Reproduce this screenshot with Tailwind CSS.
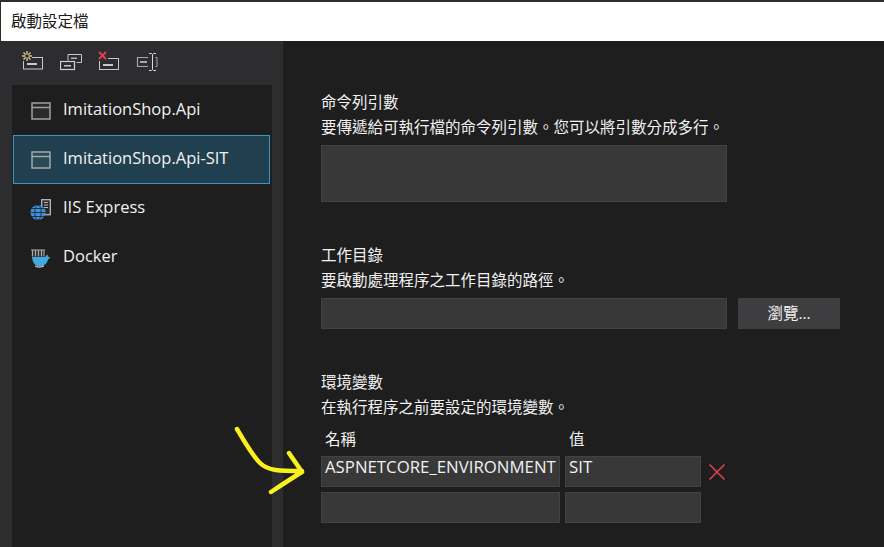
<!DOCTYPE html>
<html lang="zh-Hant">
<head>
<meta charset="utf-8">
<script src="https://cdn.jsdelivr.net/npm/@tailwindcss/browser@4"></script>
</head>
<body class="w-[884px] h-[547px] overflow-hidden bg-[#1e1e1e] text-[#f1f1f1] text-[15.5px] leading-[25px] font-['Open_Sans','Noto_Sans_CJK_TC',sans-serif]">
<div class="h-[547px] flex flex-col pl-px pt-[2px] bg-[#2d2d30]">
  <div class="h-[39px] shrink-0 bg-white text-[#1a1a1a] pl-[10px] flex items-center text-[15.5px]">啟動設定檔</div>
  <div class="flex flex-1 min-h-0">
    <aside class="w-[282px] shrink-0 bg-[#2d2d30] flex flex-col">
      <div class="h-[44px] shrink-0 pl-[21px] pb-[4px] flex items-center gap-[16px]">
        <svg width="22" height="22" viewBox="0 0 22 22" fill="none"><rect x="1.500" y="7.500" width="19" height="11.500" stroke="#c8c8c8"/><rect x="5" y="13" width="10" height="2" fill="#c8c8c8"/><rect x="0" y="1" width="10" height="10" fill="#2d2d30"/><path d="M5 1v10M0 6h10M1.500 2.500l7 7M8.500 2.500l-7 7" stroke="#d8c78a" stroke-width="1.400"/><circle cx="5" cy="6" r="1.800" fill="#2d2d30"/></svg>
        <svg width="22" height="22" viewBox="0 0 22 22" fill="none"><path d="M8 10.500V4.500H21.500V12.500H16.500" stroke="#c8c8c8"/><rect x="0.500" y="11.500" width="14" height="8" stroke="#d0d0d0" stroke-width="1.200"/><rect x="4" y="15" width="7" height="1.500" fill="#c8c8c8"/><rect x="11" y="7.500" width="6" height="1.500" fill="#b8b8b8"/></svg>
        <svg width="22" height="22" viewBox="0 0 22 22" fill="none"><rect x="1.500" y="8.500" width="19" height="11" stroke="#c8c8c8"/><rect x="5" y="14" width="10" height="2" fill="#c8c8c8"/><rect x="0" y="0" width="10" height="11" fill="#2d2d30"/><path d="M1 2l7 7M8 2l-7 7" stroke="#e0434f" stroke-width="1.800"/></svg>
        <svg width="22" height="22" viewBox="0 0 22 22" fill="none"><path d="M12 7.500H1.500v9H12" stroke="#a8a8a8" stroke-width="1.200"/><rect x="4" y="11" width="7" height="2" fill="#a8a8a8"/><path d="M19.500 7.500h1.500v9h-1.500" stroke="#a8a8a8"/><path d="M13 3.500h2.500l1 1 1-1H20M16.500 4.500v15M13 20.500h2.500l1-1 1 1H20" stroke="#d8d8d8"/></svg>
      </div>
      <nav class="flex-1 mx-[11px] bg-[#1e1e1e] pl-px pr-[2px] pt-px">
        <div class="h-[49px] flex items-center pl-[18px] gap-[12px] text-[16.5px]">
          <svg width="20" height="18" viewBox="0 0 20 18" fill="none"><rect x="1" y="1" width="18" height="16" fill="#2a2a2a" stroke="#a0a0a0" stroke-width="1.500"/><path d="M1 5.500h18" stroke="#a0a0a0" stroke-width="1.500"/></svg>
          <span class="mb-[5px]">ImitationShop.Api</span>
        </div>
        <div class="h-[49px] flex items-center pl-[17px] gap-[12px] text-[16.5px] bg-[#21404f] border border-[#3a94c4]">
          <svg width="20" height="18" viewBox="0 0 20 18" fill="none"><rect x="1" y="1" width="18" height="16" fill="#2c4956" stroke="#a0a8ac" stroke-width="1.500"/><path d="M1 5.500h18" stroke="#a0a8ac" stroke-width="1.500"/></svg>
          <span class="mb-[5px]">ImitationShop.Api-SIT</span>
        </div>
        <div class="h-[49px] flex items-center pl-[17px] gap-[11px] text-[16.5px]">
          <svg width="22" height="22" viewBox="0 0 22 22" fill="none"><rect x="11.700" y="1.700" width="8.600" height="15" fill="#2a2a2a" stroke="#b8b8b8" stroke-width="1.300"/><path d="M14 4.500h4M14 7h4M14 9.500h4" stroke="#b8b8b8"/><circle cx="8" cy="14.500" r="7.500" fill="#3f8fe0"/><path d="M1 14.500h14M2 10.500h12M2 18.500h12" stroke="#1e1e1e" stroke-width=".8"/><ellipse cx="8" cy="14.500" rx="3.200" ry="7.500" stroke="#1e1e1e" stroke-width=".8"/></svg>
          <span class="mb-[5px]">IIS Express</span>
        </div>
        <div class="h-[49px] flex items-center pl-[18px] gap-[12px] text-[16.5px]">
          <svg width="20" height="20" viewBox="0 0 20 20" fill="none"><rect x="0.500" y="1.500" width="13" height="7" fill="#3c3c3c"/><path d="M0 2h14M1.500 2v6.500M4.500 2v6.500M7.500 2v6.500M10.500 2v6.500M13 2v6.500" stroke="#a8a8a8" stroke-width="1"/><path d="M1 9H13.500c1 0 1.500-1.500 3-2.500l1 2.500 2 .5-2.500 2c-1 4-4 7-8 7-5 0-7.500-4-8-9.500z" fill="#44a8e0"/><path d="M4 18c2 1.500 6 1.500 9 0" stroke="#e8e8e8" stroke-width="1"/></svg>
          <span class="mb-[5px]">Docker</span>
        </div>
      </nav>
    </aside>
    <main class="flex-1 min-w-0 bg-[#1e1e1e] pl-[38px] pt-[49px]">
      <section>
        <h2>命令列引數</h2>
        <p>要傳遞給可執行檔的命令列引數。您可以將引數分成多行。</p>
        <div class="mt-[5px] w-[406px] h-[57px] bg-[#383838] border border-[#434346]"></div>
      </section>
      <section class="mt-[41px]">
        <h2>工作目錄</h2>
        <p>要啟動處理程序之工作目錄的路徑。</p>
        <div class="mt-[5px] flex gap-[11px]">
          <div class="w-[406px] h-[31px] bg-[#383838] border border-[#434346]"></div>
          <button class="w-[102px] h-[31px] bg-[#3e3e40] text-[#f1f1f1] text-[15.5px] flex items-center justify-center">瀏覽...</button>
        </div>
      </section>
      <section class="mt-[41px]">
        <h2>環境變數</h2>
        <p>在執行程序之前要設定的環境變數。</p>
        <div class="mt-[7px] flex gap-[5px]">
          <div class="w-[239px] pl-[4px]">名稱</div>
          <div class="w-[136px] pl-[4px]">值</div>
        </div>
        <div class="mt-[4px] flex gap-[5px] items-center">
          <div class="w-[239px] h-[31px] bg-[#383838] border border-[#434346] pl-[3px] leading-[19px] text-[16.8px] whitespace-nowrap overflow-hidden">ASPNETCORE_ENVIRONMENT</div>
          <div class="w-[136px] h-[31px] bg-[#383838] border border-[#434346] pl-[3px] leading-[19px] text-[16.8px]">SIT</div>
          <svg class="ml-[2px]" width="18" height="18" viewBox="0 0 18 18" fill="none"><path d="M1.500 1.500l15 15M16.500 1.500l-15 15" stroke="#e0434f" stroke-width="1.500"/></svg>
        </div>
        <div class="mt-[5px] flex gap-[5px]">
          <div class="w-[239px] h-[31px] bg-[#383838] border border-[#434346]"></div>
          <div class="w-[136px] h-[31px] bg-[#383838] border border-[#434346]"></div>
        </div>
      </section>
    </main>
  </div>
</div>
<svg class="absolute left-[230px] top-[425px] pointer-events-none" width="80" height="75" viewBox="0 0 80 75" fill="none"><path d="M7 4C14 16 22 30 30 38C38 46 50 46 72 46M59 28C63 34 68 41 72 47C62 53 50 61 41 67" stroke="#f9f01e" stroke-width="4.500" stroke-linecap="round" stroke-linejoin="round"/></svg>
</body>
</html>
